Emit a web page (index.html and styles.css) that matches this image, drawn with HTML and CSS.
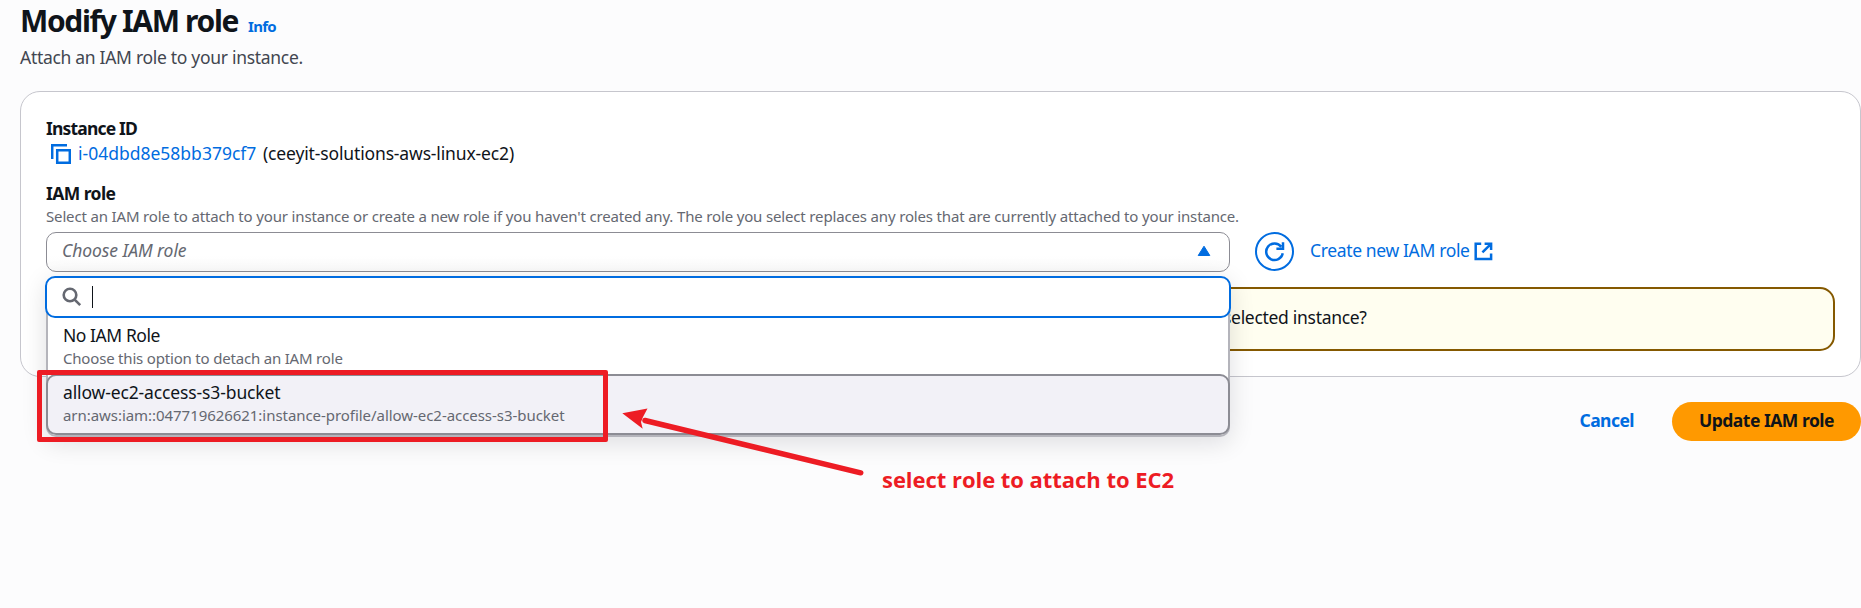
FILE: index.html
```
<!DOCTYPE html>
<html lang="en">
<head>
<meta charset="utf-8">
<title>Modify IAM role</title>
<link rel="stylesheet" href="styles.css">
</head>
<body>
<main class="page">
  <header class="header">
    <div class="heading"><h1 class="title">Modify IAM role</h1><a class="info">Info</a></div>
    <p class="subtitle">Attach an IAM role to your instance.</p>
  </header>

  <section class="card">
    <div class="label instance-label">Instance ID</div>
    <div class="instance">
      <svg class="copy" width="20" height="20" viewBox="0 0 20 20"><path d="M1.2 15V1.2H16M6.2 6.2h12.6v12.6H6.2z"/></svg>
      <a class="link instance-id">i-04dbd8e58bb379cf7</a>
      <span class="instance-name">(ceeyit-solutions-aws-linux-ec2)</span>
    </div>
    <div class="label role-label">IAM role</div>
    <div class="hint description">Select an IAM role to attach to your instance or create a new role if you haven't created any. The role you select replaces any roles that are currently attached to your instance.</div>
    <div class="field">
      <div class="select-wrap">
        <div class="select">
          <span class="placeholder">Choose IAM role</span>
          <svg width="14" height="12" viewBox="0 0 14 12"><path d="M7 1.2 12.8 10.5H1.2z" fill="#006ce0" stroke="#006ce0" stroke-linejoin="round"/></svg>
        </div>
        <div class="dropdown">
          <div class="search">
            <svg width="20" height="20" viewBox="0 0 20 20"><circle cx="8" cy="8" r="6.3"/><path d="M12.6 12.6 18.2 18.2"/></svg>
            <span class="caret"></span>
          </div>
          <div class="option">
            <div class="option-title no-role">No IAM Role</div>
            <div class="hint detach">Choose this option to detach an IAM role</div>
          </div>
          <div class="option option-active">
            <div class="option-title profile">allow-ec2-access-s3-bucket</div>
            <div class="hint arn">arn:aws:iam::047719626621:instance-profile/allow-ec2-access-s3-bucket</div>
          </div>
          <div class="highlight"></div>
        </div>
      </div>
      <button class="refresh" aria-label="Refresh">
        <svg width="22" height="22" viewBox="0 0 22 22"><path d="M18.7 12.2A8.3 8.3 0 1 1 17.2 5.8M19 1.2v6.6h-6.6"/></svg>
      </button>
      <a class="link create">Create new IAM role</a>
      <svg class="external" width="19" height="19" viewBox="0 0 19 19"><path d="M7.2 1.7H1.7v15.4h15.4v-5.5M10.6 1.7h6.5v6.4M17 1.8 8.4 10.4"/></svg>
    </div>
    <div class="alert"><span>selected instance?</span></div>
  </section>

  <footer class="actions">
    <a class="cancel">Cancel</a>
    <button class="update">Update IAM role</button>
  </footer>
</main>

<svg class="arrow" width="250" height="80" viewBox="0 0 250 80">
  <path class="arrow-line" d="M24 14.5 239.7 66.8"/>
  <path class="arrow-head" d="M1.3 7.3 26.5 2.5 22 11 20 16 21.7 22.7z"/>
</svg>
<div class="note">select role to attach to EC2</div>
</body>
</html>
```
FILE: styles.css
```
* { box-sizing: border-box; }
body {
  margin: 0;
  height: 608px;
  position: relative;
  overflow: hidden;
  background: #fcfcfd;
  color: #0f141a;
  font: 17.5px/25px "Noto Sans", sans-serif;
  white-space: nowrap;
}
h1, p { margin: 0; }
button { font: inherit; padding: 0; margin: 0; border: 0; }
svg { display: block; flex: none; fill: none; }
.page { padding: 2px 0 0 20px; }
.heading { display: flex; align-items: baseline; }
.title { font-size: 30px; line-height: 37px; font-weight: 700; letter-spacing: -1.36px; width: 228px; }
.info { font-size: 15px; line-height: 20px; font-weight: 700; letter-spacing: -.69px; color: #006ce0; }
.subtitle { margin-top: 6px; color: #424650; letter-spacing: -.3px; }
.card {
  margin-top: 21px;
  padding: 24px 25px 25px;
  border: 1px solid #c6c6cd;
  border-radius: 20px;
  background: #fff;
}
.label { font-weight: 700; }
.instance-label { letter-spacing: -.82px; }
.instance { display: flex; }
.copy { margin: 3px 7px 0 5px; stroke: #006ce0; stroke-width: 2.5; }
.link { color: #006ce0; }
.instance-id { width: 185px; }
.instance-name { letter-spacing: -.146px; }
.role-label { margin-top: 15px; letter-spacing: -.57px; }
.hint { font-size: 15px; line-height: 20px; color: #656871; }
.description { letter-spacing: -.158px; }
.field { display: flex; align-items: center; margin-top: 6px; height: 40px; }
.select-wrap { position: relative; width: 1184px; }
.select {
  display: flex;
  align-items: center;
  justify-content: space-between;
  height: 40px;
  padding: 0 18px 0 15px;
  border: 1px solid #8c8c94;
  border-radius: 10px;
  background: linear-gradient(#fff 60%, #fafafa);
}
.select svg { margin-bottom: 2px; }
.placeholder { margin-bottom: 4px; font-style: italic; color: #656871; letter-spacing: -.06px; }
.dropdown {
  position: absolute;
  z-index: 2;
  top: 45px;
  left: 0;
  width: 1184px;
  height: 160px;
  border: solid #b4b4bb;
  border-width: 0 2px 2px;
  border-radius: 10px;
  background: #fff;
  box-shadow: 0 5px 25px 1px rgba(0, 7, 22, .12);
}
.search {
  display: flex;
  align-items: center;
  gap: 10px;
  height: 42px;
  margin: -1px -3px 0;
  padding-left: 15px;
  border: 2px solid #006ce0;
  border-radius: 10px;
  background: #fff;
}
.search svg { stroke: #656871; stroke-width: 2.6; }
.caret { width: 1px; height: 22px; background: #0f141a; }
.option { padding: 5px 15px 0; height: 56px; }
.option-title { color: #0f141a; }
.option-active {
  height: 61px;
  margin: 0 -2px;
  padding: 4px 15px 0;
  border: 2px solid #8c8c94;
  border-radius: 10px;
  background: #f2f1f7;
}
.no-role { letter-spacing: -.44px; }
.detach { letter-spacing: -.19px; }
.profile { letter-spacing: -.127px; }
.arn { letter-spacing: -.05px; }
.highlight {
  position: absolute;
  left: -11px;
  top: 93px;
  width: 571px;
  height: 72px;
  border: 5px solid #ed1c24;
  border-radius: 2px;
}
.refresh {
  display: grid;
  place-items: center;
  width: 39px;
  height: 39px;
  margin: 0 16px 1px 25px;
  border: 2px solid #006ce0;
  border-radius: 50%;
  background: #fff;
}
.refresh svg { stroke: #006ce0; stroke-width: 2.5; }
.create { width: 164px; margin-bottom: 4px; letter-spacing: -.36px; }
.external { margin-bottom: 2px; stroke: #006ce0; stroke-width: 2.5; }
.alert {
  display: flex;
  align-items: center;
  height: 64px;
  margin-top: 15px;
  padding: 0 0 4px 1175px;
  border: 2px solid #855900;
  border-radius: 15px;
  background: #fffef0;
  letter-spacing: -.3px;
}
.actions { display: flex; justify-content: flex-end; align-items: center; margin-top: 25px; font-weight: 700; }
.cancel { color: #006ce0; letter-spacing: -.55px; margin: 0 38px 2px 0; }
.update { width: 189px; height: 39px; padding-bottom: 2px; border-radius: 20px; background: #f90; color: #0f141a; font-weight: 700; letter-spacing: -.5px; }
.arrow { position: absolute; z-index: 3; left: 621px; top: 406px; }
.arrow-line { stroke: #ed1c24; stroke-width: 5.5; stroke-linecap: round; }
.arrow-head { fill: #ed1c24; }
.note {
  position: absolute;
  left: 882px;
  top: 465px;
  color: #ed1c24;
  font: 700 22px/28px "Open Sans", sans-serif;
  letter-spacing: -.04px;
}
```
